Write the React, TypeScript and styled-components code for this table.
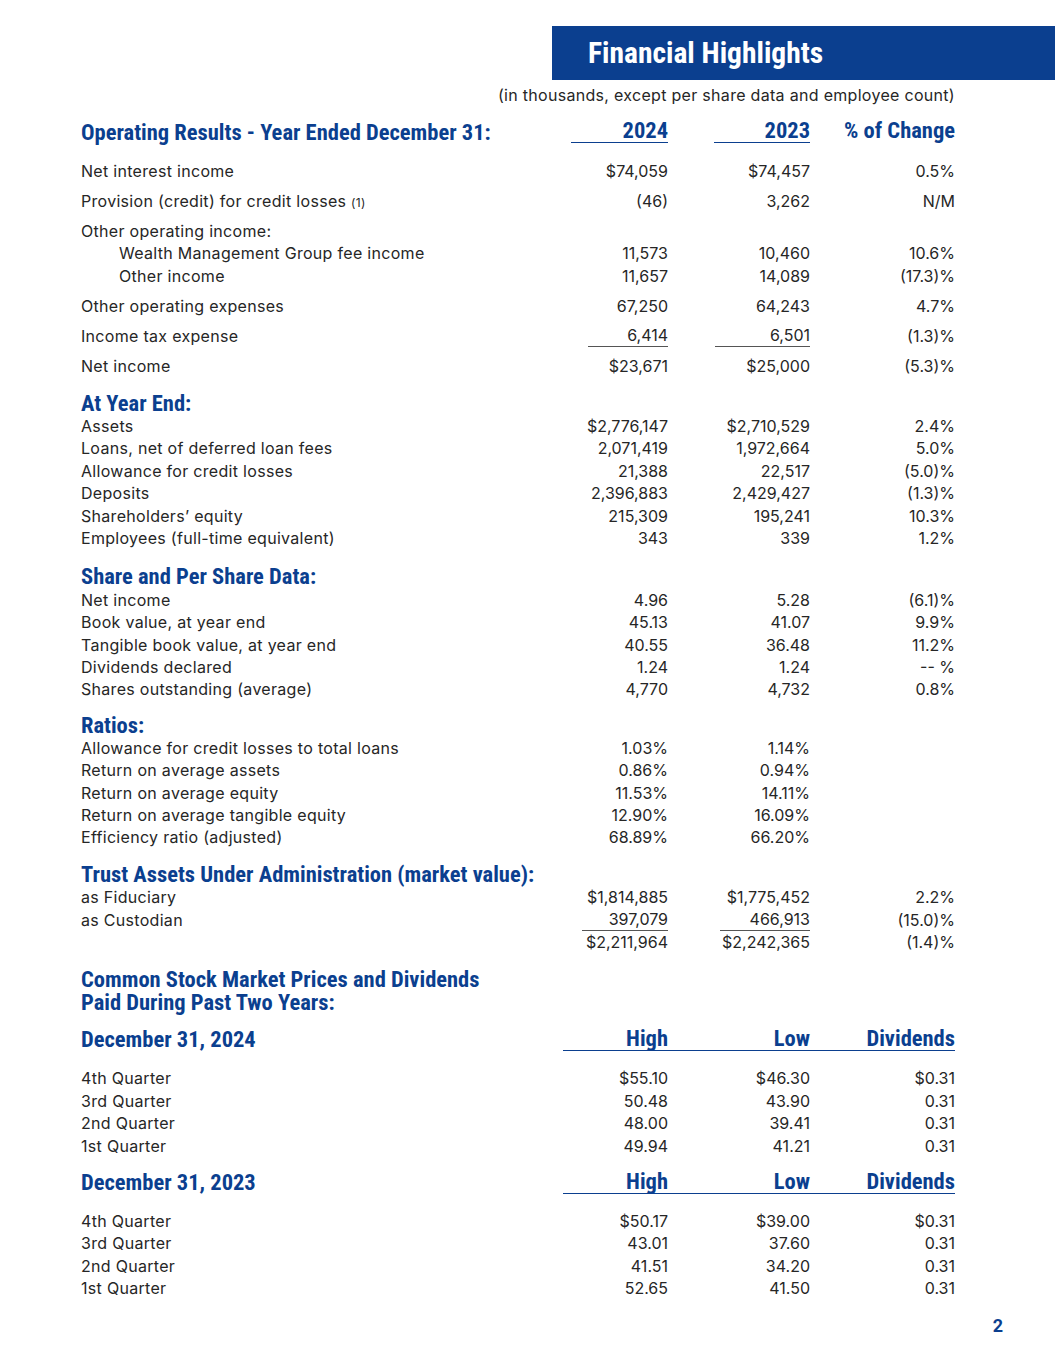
import React from "react";
import styled, { createGlobalStyle } from "styled-components";

const BLUE = "#0b3f8f";
const HEAD_FONT = `Roboto, "Open Sans", "Liberation Sans", sans-serif`;
const BODY_FONT = `Inter, "Noto Sans", sans-serif`;
const ROW_H = 22.4;

const Global = createGlobalStyle`
  html, body { margin: 0; padding: 0; background: #fff; }
  body { font-family: ${BODY_FONT}; color: #262626; }
`;

const Page = styled.div`
  width: 1055px;
  height: 1365px;
  padding-top: 26px;
  box-sizing: border-box;
  display: flex;
  flex-direction: column;
`;

const BannerWrap = styled.div`
  display: flex;
  justify-content: flex-end;
`;

const Banner = styled.div`
  width: 503px;
  height: 54px;
  background: ${BLUE};
  display: flex;
  align-items: center;
  padding-left: 36px;
  box-sizing: border-box;
`;

const Title = styled.h1`
  margin: 0;
  font-family: ${HEAD_FONT};
  font-stretch: 75%;
  font-weight: 700;
  font-size: 29.5px;
  color: #fff;
`;

const Content = styled.div`
  padding: 0 100px 0 81px;
  display: flex;
  flex-direction: column;
`;

const Note = styled.div`
  text-align: right;
  font-size: 16px;
  letter-spacing: 0.3px;
  line-height: 22px;
  margin-top: 4px;
`;

const Grid = styled.div<{ $top?: number }>`
  display: grid;
  grid-template-columns: 1fr 120px 142px 145px;
  margin-top: ${(p) => p.$top ?? 0}px;
  align-items: end;
`;

const headText = `
  font-family: ${HEAD_FONT};
  font-stretch: 75%;
  font-weight: 700;
  font-size: 22.5px;
  color: ${BLUE};
  white-space: nowrap;
`;

const HeadLabel = styled.div`
  ${headText}
  line-height: 22.5px;
`;

const HeadCell = styled.div<{ $line?: number }>`
  ${headText}
  line-height: 24px;
  justify-self: end;
  text-align: right;
  width: ${(p) => (p.$line ? `${p.$line}px` : "auto")};
  border-bottom: 1.5px solid ${(p) => (p.$line ? BLUE : "transparent")};
`;

const Label = styled.div<{ $indent?: boolean }>`
  font-size: 16px;
  letter-spacing: 0.3px;
  line-height: ${ROW_H}px;
  height: ${ROW_H}px;
  padding-left: ${(p) => (p.$indent ? 38 : 0)}px;
  white-space: nowrap;
`;

const Small = styled.span`
  font-size: 12px;
  line-height: 1;
`;

const Num = styled.div`
  font-size: 16px;
  line-height: ${ROW_H}px;
  height: ${ROW_H}px;
  text-align: right;
`;

const Under = styled.span<{ $w: number }>`
  display: inline-block;
  width: ${(p) => p.$w}px;
  text-align: right;
  border-bottom: 1px solid #555;
  line-height: 21.4px;
  vertical-align: top;
`;

const Footer = styled.div`
  display: flex;
  justify-content: flex-end;
  padding-right: 52px;
  margin-top: 15px;
`;

const PageNum = styled.span`
  font-family: ${HEAD_FONT};
  font-weight: 700;
  font-size: 18px;
  color: ${BLUE};
`;

type Cell = string | { v: string; u: number };
type RowData = { label: React.ReactNode; vals: Cell[]; indent?: boolean; top?: number };

const renderCell = (c: Cell, i: number) =>
  typeof c === "string" ? (
    <Num key={i}>{c}</Num>
  ) : (
    <Num key={i}>
      <Under $w={c.u}>{c.v}</Under>
    </Num>
  );

const Rows: React.FC<{ rows: RowData[]; first?: number }> = ({ rows, first = 1 }) => (
  <>
    {rows.map((r, i) => (
      <Grid key={i} $top={r.top ?? (i === 0 ? first : 0)}>
        <Label $indent={r.indent}>{r.label}</Label>
        {r.vals.map(renderCell)}
        {Array.from({ length: 3 - r.vals.length }).map((_, k) => (
          <Num key={`e${k}`} />
        ))}
      </Grid>
    ))}
  </>
);

const operating: RowData[] = [
  { label: "Net interest income", vals: ["$74,059", "$74,457", "0.5%"], top: 17 },
  { label: <>Provision (credit) for credit losses <Small>(1)</Small></>, vals: ["(46)", "3,262", "N/M"], top: 7.5 },
  { label: "Other operating income:", vals: [], top: 7.5 },
  { label: "Wealth Management Group fee income", vals: ["11,573", "10,460", "10.6%"], indent: true },
  { label: "Other income", vals: ["11,657", "14,089", "(17.3)%"], indent: true },
  { label: "Other operating expenses", vals: ["67,250", "64,243", "4.7%"], top: 7.8 },
  { label: "Income tax expense", vals: [{ v: "6,414", u: 80 }, { v: "6,501", u: 95 }, "(1.3)%"], top: 7.8 },
  { label: "Net income", vals: ["$23,671", "$25,000", "(5.3)%"], top: 7.8 },
];

const yearEnd: RowData[] = [
  { label: "Assets", vals: ["$2,776,147", "$2,710,529", "2.4%"] },
  { label: "Loans, net of deferred loan fees", vals: ["2,071,419", "1,972,664", "5.0%"] },
  { label: "Allowance for credit losses", vals: ["21,388", "22,517", "(5.0)%"] },
  { label: "Deposits", vals: ["2,396,883", "2,429,427", "(1.3)%"] },
  { label: "Shareholders\u2019 equity", vals: ["215,309", "195,241", "10.3%"] },
  { label: "Employees (full-time equivalent)", vals: ["343", "339", "1.2%"] },
];

const perShare: RowData[] = [
  { label: "Net income", vals: ["4.96", "5.28", "(6.1)%"] },
  { label: "Book value, at year end", vals: ["45.13", "41.07", "9.9%"] },
  { label: "Tangible book value, at year end", vals: ["40.55", "36.48", "11.2%"] },
  { label: "Dividends declared", vals: ["1.24", "1.24", "-- %"] },
  { label: "Shares outstanding (average)", vals: ["4,770", "4,732", "0.8%"] },
];

const ratios: RowData[] = [
  { label: "Allowance for credit losses to total loans", vals: ["1.03%", "1.14%"] },
  { label: "Return on average assets", vals: ["0.86%", "0.94%"] },
  { label: "Return on average equity", vals: ["11.53%", "14.11%"] },
  { label: "Return on average tangible equity", vals: ["12.90%", "16.09%"] },
  { label: "Efficiency ratio (adjusted)", vals: ["68.89%", "66.20%"] },
];

const trust: RowData[] = [
  { label: "as Fiduciary", vals: ["$1,814,885", "$1,775,452", "2.2%"] },
  { label: "as Custodian", vals: [{ v: "397,079", u: 86 }, { v: "466,913", u: 90 }, "(15.0)%"] },
  { label: "", vals: ["$2,211,964", "$2,242,365", "(1.4)%"] },
];

const q2024: RowData[] = [
  { label: "4th Quarter", vals: ["$55.10", "$46.30", "$0.31"] },
  { label: "3rd Quarter", vals: ["50.48", "43.90", "0.31"] },
  { label: "2nd Quarter", vals: ["48.00", "39.41", "0.31"] },
  { label: "1st Quarter", vals: ["49.94", "41.21", "0.31"] },
];

const q2023: RowData[] = [
  { label: "4th Quarter", vals: ["$50.17", "$39.00", "$0.31"] },
  { label: "3rd Quarter", vals: ["43.01", "37.60", "0.31"] },
  { label: "2nd Quarter", vals: ["41.51", "34.20", "0.31"] },
  { label: "1st Quarter", vals: ["52.65", "41.50", "0.31"] },
];

const SectionHead: React.FC<{ children: React.ReactNode; top: number }> = ({ children, top }) => (
  <Grid $top={top}>
    <HeadLabel>{children}</HeadLabel>
  </Grid>
);

const StockHead = styled.div<{ $top: number }>`
  display: grid;
  grid-template-columns: 1fr 105px 142px 145px;
  margin-top: ${(p) => p.$top}px;
  align-items: end;
  margin-bottom: 16px;
`;

const StockCell = styled.div`
  ${headText}
  line-height: 24px;
  text-align: right;
  border-bottom: 1.5px solid ${BLUE};
`;

const StockLabel = styled(HeadLabel)`
  line-height: 24px;
`;

const QuarterHead: React.FC<{ title: string; top: number }> = ({ title, top }) => (
  <StockHead $top={top}>
    <StockLabel>{title}</StockLabel>
    <StockCell>High</StockCell>
    <StockCell>Low</StockCell>
    <StockCell>Dividends</StockCell>
  </StockHead>
);

export default function App() {
  return (
    <Page>
      <Global />
      <BannerWrap>
        <Banner>
          <Title>Financial Highlights</Title>
        </Banner>
      </BannerWrap>
      <Content>
        <Note>(in thousands, except per share data and employee count)</Note>
        <Grid $top={12}>
          <HeadLabel>Operating Results - Year Ended December 31:</HeadLabel>
          <HeadCell $line={97}>2024</HeadCell>
          <HeadCell $line={96}>2023</HeadCell>
          <HeadCell>% of Change</HeadCell>
        </Grid>
        <Rows rows={operating} />

        <SectionHead top={14}>At Year End:</SectionHead>
        <Rows rows={yearEnd} />

        <SectionHead top={16}>Share and Per Share Data:</SectionHead>
        <Rows rows={perShare} />

        <SectionHead top={13}>Ratios:</SectionHead>
        <Rows rows={ratios} first={0.5} />

        <SectionHead top={14}>Trust Assets Under Administration (market value):</SectionHead>
        <Rows rows={trust} />

        <SectionHead top={15}>
          Common Stock Market Prices and Dividends
          <br />
          Paid During Past Two Years:
        </SectionHead>

        <QuarterHead title="December 31, 2024" top={13} />
        <Rows rows={q2024} first={0} />

        <QuarterHead title="December 31, 2023" top={12} />
        <Rows rows={q2023} first={0} />
      </Content>
      <Footer>
        <PageNum>2</PageNum>
      </Footer>
    </Page>
  );
}
